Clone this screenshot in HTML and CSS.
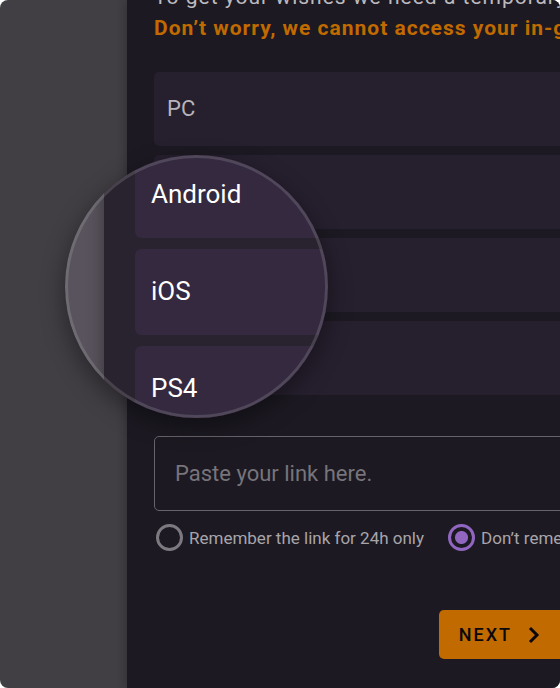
FILE: index.html
```html
<!DOCTYPE html>
<html lang="en">
<head>
<meta charset="utf-8">
<meta name="viewport" content="width=device-width, initial-scale=1">
<title>Wish import</title>
<link rel="stylesheet" href="styles.css">
</head>
<body>
<div class="page">
  <main class="panel">
    <p class="intro">To get your wishes we need a temporary<br><strong>Don’t worry, we cannot access your in-g</strong></p>
    <div class="options">
      <button class="option" type="button">PC</button>
      <div class="option"></div>
      <div class="option"></div>
      <div class="option"></div>
    </div>
    <form class="form">
      <input class="link" type="text" aria-label="Link" placeholder="Paste your link here.">
      <div class="choices">
        <label class="choice"><input type="radio" name="remember">Remember the link for 24h only</label>
        <label class="choice"><input type="radio" name="remember" checked>Don’t reme</label>
      </div>
      <button class="next" type="button">NEXT
        <svg viewBox="0 0 12 18" width="12" height="18" aria-hidden="true"><path d="M2 2l7 7-7 7"/></svg>
      </button>
    </form>
  </main>
  <section class="lens">
    <div class="lens-panel">
      <button class="lens-option" type="button">Android</button>
      <button class="lens-option" type="button">iOS</button>
      <button class="lens-option" type="button">PS4</button>
    </div>
  </section>
</div>
</body>
</html>
```
FILE: styles.css
```css
* {
  box-sizing: border-box;
}

html {
  background: #fff;
}

body {
  margin: 0;
  font-family: Roboto, "Liberation Sans", sans-serif;
}

button,
input {
  font: inherit;
  letter-spacing: inherit;
}

.page {
  position: relative;
  min-height: 100vh;
  padding-left: 127px;
  overflow: hidden;
  border-radius: 8px;
  background: #413e44;
}

.panel {
  min-height: 100vh;
  padding-left: 27px;
  overflow: hidden;
  background: #1c1922;
  box-shadow: 0 0 10px rgba(0, 0, 0, 0.3);
}

.intro {
  margin: -18px 0 28px;
  color: #bdbabf;
  font-size: 21px;
  line-height: 31px;
  letter-spacing: 1px;
  white-space: nowrap;
}

.intro strong {
  color: #c06a00;
}

.options {
  display: grid;
  gap: 9px;
  margin-right: -8px;
}

.option {
  height: 74px;
  padding: 0 13px 2px;
  border: 0;
  border-radius: 5px;
  background: #261f2e;
  color: #b8b5ba;
  font-size: 22px;
  text-align: left;
}

.form {
  margin-top: 41px;
}

.link {
  display: block;
  width: calc(100% + 8px);
  height: 75px;
  padding: 0 20px;
  border: 1px solid #67636a;
  border-radius: 5px;
  outline: 0;
  background: transparent;
  color: #b8b5ba;
  font-size: 22px;
}

.link::placeholder {
  color: #77747b;
  opacity: 1;
}

.choices {
  display: flex;
  gap: 24px;
  margin: 13px 0 0 2px;
  white-space: nowrap;
}

.choice {
  display: flex;
  flex: none;
  align-items: center;
  gap: 6px;
  color: #a8a5aa;
  font-size: 17px;
}

.choice input {
  flex: none;
  width: 27px;
  height: 27px;
  margin: 0;
  border: 3px solid #7d7980;
  border-radius: 50%;
  appearance: none;
}

.choice input:checked {
  border-color: #9166c0;
  background: radial-gradient(circle, #9166c0 6px, transparent 7px);
}

.next {
  display: flex;
  align-items: center;
  gap: 16px;
  height: 49px;
  margin: 59px -8px 0 auto;
  padding: 0 28px 0 20px;
  border: 0;
  border-radius: 5px;
  background: #c06a00;
  color: #0b080c;
  font-size: 18px;
  font-weight: 500;
  letter-spacing: 2px;
}

.next svg {
  fill: none;
  stroke: currentColor;
  stroke-width: 3;
}

/* Magnifier floating over the platform list */
.lens {
  position: absolute;
  top: 155px;
  left: 65px;
  width: 263px;
  height: 263px;
  padding-left: 39px;
  overflow: hidden;
  border-radius: 50%;
  background: #58535c;
  box-shadow: 0 8px 24px rgba(0, 0, 0, 0.4);
}

.lens::after {
  content: "";
  position: absolute;
  inset: 0;
  border: 3px solid rgba(255, 255, 255, 0.14);
  border-radius: 50%;
  pointer-events: none;
}

.lens-panel {
  display: grid;
  gap: 11px;
  margin: -3px 0;
  padding-left: 31px;
  background: #29222f;
  box-shadow: 0 0 16px rgba(0, 0, 0, 0.35);
}

.lens-option {
  height: 86px;
  padding: 0 16px 2px;
  border: 0;
  border-radius: 6px;
  background: #34293f;
  color: #fff;
  font-size: 26px;
  text-align: left;
}
```
